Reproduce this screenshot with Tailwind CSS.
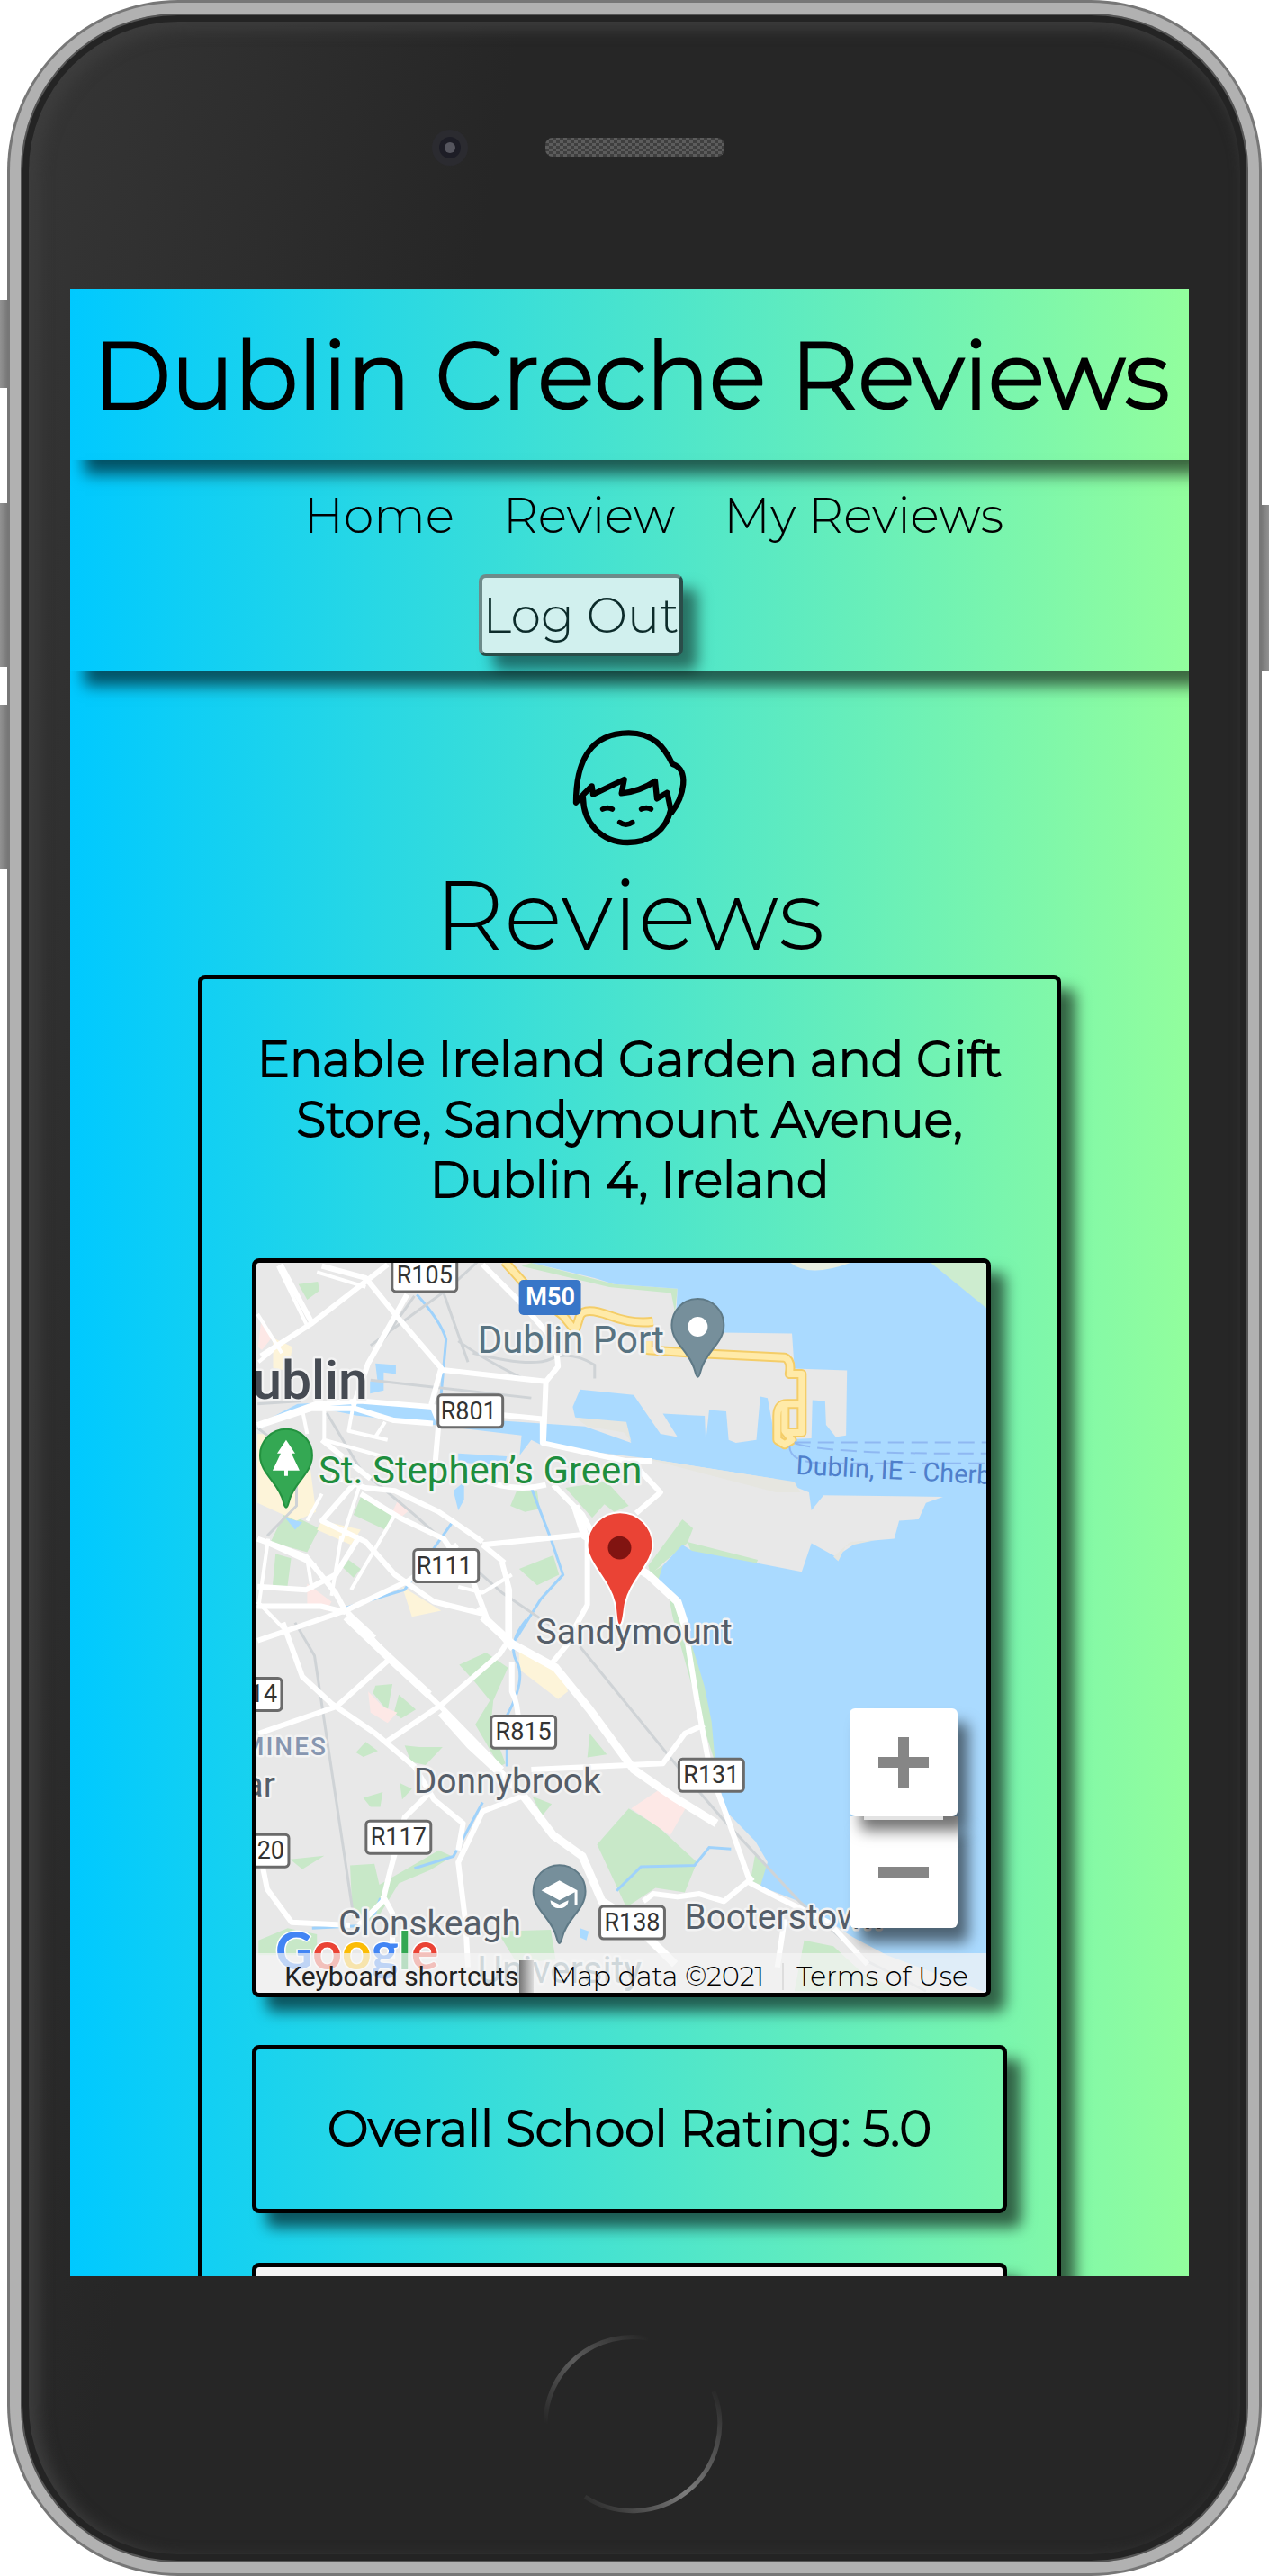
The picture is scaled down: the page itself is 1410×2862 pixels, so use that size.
<!DOCTYPE html>
<html lang="en">
<head>
<meta charset="utf-8">
<title>Dublin Creche Reviews</title>
<script src="https://cdn.jsdelivr.net/npm/@tailwindcss/browser@4"></script>
</head>
<body class="bg-white font-[Montserrat,Inter,sans-serif] text-black">
<div class="relative overflow-hidden pl-2 pr-2">
  <!-- side buttons -->
  <div class="absolute left-0 top-[333px] h-[98px] w-3 bg-gradient-to-r from-[#929292] to-[#6c6c6c]"></div>
  <div class="absolute left-0 top-[559px] h-[182px] w-3 bg-gradient-to-r from-[#929292] to-[#6c6c6c]"></div>
  <div class="absolute left-0 top-[783px] h-[182px] w-3 bg-gradient-to-r from-[#929292] to-[#6c6c6c]"></div>
  <div class="absolute right-0 top-[561px] h-[184px] w-3 bg-gradient-to-r from-[#6c6c6c] to-[#929292]"></div>

  <!-- phone shell -->
  <div class="relative rounded-[190px] bg-[#777] p-[3px]">
    <div class="rounded-[187px] bg-[#b1b1b1] p-[12px]">
      <div class="rounded-[175px] bg-[#262626] bg-[linear-gradient(100deg,#363636_0%,#262626_30%)] shadow-[inset_0_0_0_2px_#555,inset_0_0_0_9px_#242424,inset_8px_6px_16px_12px_#3d3d3d]">
        <div class="flex h-[306px] items-start justify-center pt-[129px]">
          <div class="mr-[86px] flex size-10 items-center justify-center rounded-full bg-[#2b2b30]">
            <div class="flex size-6 items-center justify-center rounded-full bg-[#1d1d26]">
              <div class="size-3 rounded-full bg-[#55555e]"></div>
            </div>
          </div>
          <div class="mr-[125px] mt-[9px] h-[21px] w-[199px] rounded-lg bg-[#484848] bg-[repeating-conic-gradient(#5c5c5c_0_25%,#3f3f3f_0_50%)] bg-[size:8px_6px]"></div>
        </div>

        <!-- screen -->
        <div class="ml-[55px] mr-[66px] h-[2208px] overflow-hidden bg-[linear-gradient(90deg,#00c9ff,#92fe9d)]">
          <header class="flex h-[190px] items-center justify-center pl-1 shadow-[16px_16px_16px_rgba(0,0,0,0.6)]">
            <h1 class="whitespace-nowrap text-[105px] font-light leading-none [-webkit-text-stroke:3px_#000]">Dublin Creche Reviews</h1>
          </header>
          <nav class="flex h-[235px] flex-col items-center shadow-[16px_16px_16px_rgba(0,0,0,0.6)]">
            <div class="flex gap-[54px] pl-[54px] pt-[28px] text-[54px] font-light leading-[68px]">
              <a href="#">Home</a>
              <a href="#">Review</a>
              <a href="#">My Reviews</a>
            </div>
            <button class="mr-[108px] mt-[31px] h-[91px] rounded-lg border-4 border-b-[#2a4d49] border-l-[#6d8b8a] border-r-[#2a4d49] border-t-[#6d8b8a] bg-[#d1f0ee] text-[54px] font-light leading-none text-[#0c2b2a] shadow-[16px_16px_16px_rgba(0,0,0,0.5)]">Log Out</button>
          </nav>

          <main class="flex flex-col px-[142px]">
            <svg class="mt-[44px] h-[170px] w-[200px] self-center" viewBox="0 0 600 510" fill="none" stroke="#000" stroke-width="19" stroke-linecap="round" stroke-linejoin="round" aria-hidden="true">
              <path d="M120 305C120 180 160 73 296 73c80 0 118 45 146 104 58 18 38 108-4 162l-14-67-34 20-6-58c-30 20-72 36-112 40l9-46-104 50-4-28-27 27z"/>
              <path d="M144 290c0 80 60 148 148 148 74 0 130-42 144-110"/>
              <path d="M209 327q17-8 32 0M338 327q17-8 32 0M266 371q21 15 42 0" stroke-width="17"/>
            </svg>
            <h2 class="text-center text-[108px] font-light leading-[112px]">Reviews</h2>

            <section class="mt-[11px] rounded-lg border-[5px] border-black px-[55px] pb-16 pt-[56px] shadow-[16px_16px_16px_rgba(0,0,0,0.6)]">
              <h3 class="text-center text-[54px] font-light leading-[67px] [-webkit-text-stroke:2px_#000]">Enable Ireland Garden and Gift Store, Sandymount Avenue, Dublin 4, Ireland</h3>

              <!-- map -->
              <div class="relative mr-[18px] mt-[53px] aspect-square overflow-hidden rounded-lg border-[5px] border-black bg-[#e8e8e8] shadow-[16px_16px_16px_rgba(0,0,0,0.6)]">
                <svg class="block size-full" viewBox="0 0 812 812" font-family="Roboto, sans-serif" font-size="39">
                  <g transform="matrix(.542 0 0 .3333 -14 -23)">
                    <!-- parks and districts -->
                    <g fill="#c8e8c8">
                      <path d="M112 140l40-8 3 30-25 30zM240 850l65 60-15 50-65-50zM85 900l70 55-25 80-75-35zM65 1040l32 15-8 100-30-10zM215 1060l25 30-15 30-22-35zM560 830l42 0 5 60-30 10-30-20zM660 820l85-20 45 80-30 20-20-25-25 45zM565 1090l70-45 12 65-45 35zM900 925l22 30-12 50-45 60-30 45-5-30zM910 1000l145 60-5 20-130-40z"/>
                      <path d="M442 1410l55-40 45 50-30 110-5 80 30 130-12 10-50-140 30-80-35-70zM270 1480l35-5-10 90-30-60zM318 1510l35 50-30 30-15-20zM330 1680l30 5 48 0-35 60-30-10zM250 1668l25 30-30 20-15-15zM710 1640l35 70-40 10zM592 1850l40 25-20 40zM245 1855l40-20-5 50-20 0zM320 1805l25 20-20 35zM95 2060l70-12-45 45zM400 2030l28 20-45 45-65 45-30 80-20 50-45-20-5-170 50-5 10 70zM790 1890l60 60 80 120-25 100-60-15-60 65-60-210zM1050 2040l35 60-20 50-25-20zM520 2300l110-5 10 100-80 10zM30 2330l60-40 60 20 0 70-120 0zM1150 2330l60 20 60 90 80 60h-220z"/>
                      <path d="M590 69L760 140 890 155 885 235 877 170 750 150 570 80zM860 1080l-30 30 70 90 30 160 40 300 30 240-60-300-60-350z"/>
                    </g>
                    <g fill="#fde8e6"><path d="M35 270l22 50-20 40-8-10zM315 865l28 25-18 25-20-15zM130 1140l50 60-10 30-40-20zM255 1500l30 50 30 20-20 35-35-35zM850 1830l60 50-35 100-80-90z"/></g>
                    <g fill="#fdf4d9"><path d="M28 640l100 10 20 250-40 30-80-60zM60 320l40 30-10 80-30-10zM160 930l80 30-20 50-70-50zM325 1150l50 50 30 30-60 20zM565 1360l90 80 10 60-20 25-80-100z"/></g>
                    <!-- sea, river and docks -->
                    <g fill="#aadaff">
                      <path d="M590 69L720 120 760 140 890 155 885 300 1125 305 1130 422 1238 428 1236 645 1215 650 1195 610 1193 530 1167 527 1165 655 1090 660 1085 610 1075 520 1060 515 1052 660 1010 670 995 660 990 565 955 560 948 665 946 580 860 572 890 650 855 640 800 510 690 492 675 550 680 585 780 610 795 670 700 615 530 596 400 558 300 545 230 530 110 540 28 610 28 625 110 570 160 555 230 578 390 610 570 645 566 712 590 660 615 680 820 720 1090 790 1160 835 1165 895 1190 845 1435 850 1400 870 1385 925 1345 930 1335 990 1260 1000 1215 1050 1165 1005 1145 1100 1050 1070 920 1030 900 1010 860 1080 850 1130 890 1210 910 1300 930 1400 945 1480 960 1600 970 1780 990 1900 1050 2000 1075 2070 1060 2150 1140 2200 1250 2320 1320 2380 1524 2505V69z"/>
                      <path d="M440 705l100 10-5 30-95-10zM430 830l22-30v60l-12 35zM270 405l42 5v30l-25-5v60l-28 10v-40l15-5zM690 2290l18 10-5 30-14-10zM85 920l35 15-15 25z"/>
                    </g>
                    <path d="M1122 69Q1160 120 1245 69z" fill="#e8eee2"/>
                    <path d="M1410 69L1524 220V69z" fill="#cdeccf"/>
                    <path d="M680 585l105 15 10 65-15-30-75-20zM1210 1050l35-50 50-5-60 20-15 50zM820 720l310 80 12 35-50 0z" fill="#e6e6e0"/>
                    <g fill="none" stroke="#9fd2fb" stroke-width="3">
                      <path d="M355 175q50 90 60 150l-10 180" vector-effect="non-scaling-stroke"/>
                      <path d="M590 820l40 170 25 120-45 80-50 130M580 1260q-40 80-20 140t-20 180v170M430 930l-100 230-120 60M765 2165l50-80 110-5 30-60 45 5M490 1870l-60 180-80 40M280 2190l-20 90-120 10" vector-effect="non-scaling-stroke"/>
                    </g>
                    <!-- railways -->
                    <g fill="none" stroke="#cfd3d6" stroke-width="3">
                      <path vector-effect="non-scaling-stroke" d="M260 345l100-120 60-70 60-90M350 180l-70 160M410 170l50 230M440 330q60 70 140 130M470 370q120 50 160 20t90 20v45M260 460l330 60M28 540l90-10M170 570l70 190 110 150 180 260 100 110M105 1270l40 110 80 870M690 1350l200 400 90 170 160 280 140 200 120 100M28 620l80 100 0 160-60 100"/>
                    </g>
                    <!-- streets -->
                    <g fill="none" stroke="#fff" stroke-linejoin="round">
                      <g stroke-width="4">
                        <path vector-effect="non-scaling-stroke" d="M165 540v120l130 60 10 80M225 540l-10 90 80 30M290 600l-20 50M130 640l-10-80M240 800l-40 200M160 840l-30 90M50 990l-20 230M310 910l-90 250M28 990l120 90M130 1060l10 100M28 1200l60 100M70 80l60 200M28 240l50 130M150 100l100 50M60 360l-30 40M480 1220l70 140M540 1320v-200M200 980l-20 200M440 1150l50 20 60-60"/>
                      </g>
                      <g stroke-width="6">
                        <path vector-effect="non-scaling-stroke" d="M75 75l65 195-105 110M295 75l-155 195M160 80l90 40 60 120 95 180-20 120 15 60-10 190M335 175l-80 230-30 140M490 75l80 130 70 130 5 80-25 50-5 200M400 425l220 40M590 300l60 80"/>
                        <path vector-effect="non-scaling-stroke" d="M28 610l120-70 90-10 150 20 130 25 95 15v80l170 60 55 0M28 615l110-60 90 0 80 40 80 10M800 740l55 95-50 70M635 810l60 100 20 60M490 1010l215-35M705 970l0 240-30 90M180 780l70 40 60 10 90 70 90 100M470 780q80 60 150 30"/>
                        <path vector-effect="non-scaling-stroke" d="M160 660l100 130M230 800l-70 130 90 70 60 110 80 90 100 40M240 840l80 80 90 70 60 140 30 130M530 1070l15 90 0 170M490 1010l45 60M28 990l100 60 60 120 20 60 60 90M28 1150l100 10 60-50 50-130M28 1215l130 0 50 20M28 1330l180-100 130-100 100-120M210 1230l90 160 110 170 120 200"/>
                        <path vector-effect="non-scaling-stroke" d="M80 1270l40 180 60 90 90 100 80 110 40 110 60 80-10 90M300 1390l-110 160-160 90M295 1665l110-120 120-170 20-50M550 1400v100q20 60 10 180M630 1410l40-80M28 2000l20 160 50 110 120 10M380 1840l-50 80-30 180-15 100-50 80M570 1850l-80 50-50 170 15 200 5 150M285 2180l20 60v150M590 1760l270-20 45-100 40-30M910 1330l20 200 35 300M960 1780l30 130 50 230 60 50 100 80 80 140M820 2200l20-25 50 10 45-10 50 25 60-80M1110 2260l-15 160"/>
                      </g>
                      <g stroke-width="9">
                        <path vector-effect="non-scaling-stroke" d="M680 880l20 100 130 130 60 90 20 100M490 1250l60 90 90 80 70 140 90 200 80 90 90 90M210 1250l90 140 80 120M405 1570l60 110 100 150 70 150 60 70 40 150 50 50 100 160"/>
                      </g>
                    </g>
                    <!-- motorway and port road -->
                    <g fill="none" stroke-linejoin="round">
                      <path vector-effect="non-scaling-stroke" stroke="#f4cd68" stroke-width="11" d="M535 65l50 90 70 90 25 50 10-50q10-30 60 0t90 20M830 330v30l90 10 190 15q15 10 10 55h25v195h-35M1145 540h-30q-20 0-20 40v80l15 15 15-15-15-30v-85"/>
                      <path vector-effect="non-scaling-stroke" stroke="#ffeaa8" stroke-width="7" d="M535 65l50 90 70 90 25 50 10-50q10-30 60 0t90 20M830 330v30l90 10 190 15q15 10 10 55h25v195h-35M1145 540h-30q-20 0-20 40v80l15 15 15-15-15-30v-85"/>
                    </g>
                    <path vector-effect="non-scaling-stroke" fill="none" stroke="#8fb8f2" stroke-width="2" stroke-dasharray="18 8" d="M1130 668H1524M1130 670q60 38 394 35M1120 680q0 60 80 58h324"/>
                  </g>

                  <!-- pins -->
                  <path d="M491 127c-1 0-2-2-3-6-5-22-26-31-26-52a29 29 0 0 1 58 0c0 21-21 30-26 52-1 4-2 6-3 6z" fill="#768f9b" stroke="#5f7a87" stroke-width="2"/>
                  <circle cx="491" cy="71" r="11" fill="#fff"/>
                  <path d="M33 272c-1 0-2-2-3-6-5-22-26-31-26-52a29 29 0 0 1 58 0c0 21-21 30-26 52-1 4-2 6-3 6z" fill="#34a853" stroke="#23923f" stroke-width="2"/>
                  <path d="M33 197l10 15h-4l9 19H35v6h-4v-6H18l9-19h-4z" fill="#fff"/>
                  <path d="M337 757c-1 0-2-2-3-6-5-22-26-31-26-52a29 29 0 0 1 58 0c0 21-21 30-26 52-1 4-2 6-3 6z" fill="#768f9b" stroke="#5f7a87" stroke-width="2"/>
                  <path d="M337 687l20 11v17h-3v-15l-17 9-20-11zM327 709l10 5 10-5c0 12-20 12-20 0z" fill="#fff"/>

                  <!-- place names -->
                  <g fill="#555e69" stroke="#f3f3f3" stroke-width="5" paint-order="stroke" stroke-linejoin="round">
                    <text x="246" y="100" font-size="42" fill="#587381">Dublin Port</text>
                    <text x="124" y="151" text-anchor="end" font-size="59" font-weight="500" fill="#464b53">Dublin</text>
                    <text x="69" y="245" font-size="42" fill="#1e8e3e">St. Stephen’s Green</text>
                    <text x="311" y="424">Sandymount</text>
                    <text x="79" y="548" text-anchor="end" font-size="28" font-weight="500" letter-spacing="2" fill="#8796b0">RATHMINES</text>
                    <text x="21" y="594" text-anchor="end">Rathgar</text>
                    <text x="175" y="590">Donnybrook</text>
                    <text x="91" y="748">Clonskeagh</text>
                    <text x="476" y="741">Booterstown</text>
                    <text x="246" y="801" font-size="42" fill="#768f9b">University</text>
                  </g>
                  <text x="600" y="235" font-size="29" fill="#4f7fcb" transform="rotate(3 600 235)">Dublin, IE - Cherbourg</text>

                  <!-- road shields -->
                  <g fill="#fff" stroke="#6b6b6b" stroke-width="3">
                    <rect x="151" y="-6" width="72" height="38" rx="4"/><rect x="202" y="147" width="72" height="36" rx="4"/>
                    <rect x="175" y="319" width="72" height="36" rx="4"/><rect x="-44" y="462" width="72" height="36" rx="4"/>
                    <rect x="261" y="504" width="72" height="36" rx="4"/><rect x="470" y="552" width="72" height="36" rx="4"/>
                    <rect x="122" y="621" width="72" height="36" rx="4"/><rect x="-36" y="636" width="72" height="36" rx="4"/>
                    <rect x="382" y="716" width="72" height="36" rx="4"/>
                  </g>
                  <rect x="292" y="19" width="69" height="39" rx="5" fill="#3876c8"/>
                  <g font-size="27" fill="#333" text-anchor="middle">
                    <text x="187" y="23">R105</text><text x="236" y="174">R801</text><text x="209" y="346">R111</text>
                    <text x="-8" y="489">R114</text><text x="297" y="531">R815</text><text x="506" y="579">R131</text>
                    <text x="158" y="648">R117</text><text x="0" y="663">R820</text><text x="418" y="743">R138</text>
                    <text x="327" y="47" fill="#fff" font-weight="700">M50</text>
                  </g>

                  <path d="M404 403c-4 0-3-10-5-22-5-28-31-46-31-67a36 36 0 0 1 73 0c0 21-26 39-31 67-2 12-2 22-6 22z" fill="#ea4335" stroke="#fff" stroke-width="2"/>
                  <circle cx="404" cy="317" r="13" fill="#811411"/>

                  <text x="21" y="786" font-size="57" font-weight="700" font-family="Lato, sans-serif" stroke="#fff" stroke-width="3" paint-order="stroke"><tspan fill="#4285f4">G</tspan><tspan fill="#ea4335">o</tspan><tspan fill="#fbbc05">o</tspan><tspan fill="#4285f4">g</tspan><tspan fill="#34a853">l</tspan><tspan fill="#ea4335">e</tspan></text>
                </svg>

                <div class="absolute right-[32px] top-[495px] flex flex-col">
                  <button aria-label="Zoom in" class="z-10 flex size-[120px] items-center justify-center rounded-md bg-white shadow-[12px_16px_16px_rgba(0,0,0,0.55)]">
                    <svg class="size-14" viewBox="0 0 56 56" fill="#868686"><path d="M22 0h12v22h22v12H34v22H22V34H0V22h22z"/></svg>
                  </button>
                  <div class="relative z-20 -mb-1 bg-transparent px-4"><div class="h-1 bg-[#e3e3e3]"></div></div>
                  <button aria-label="Zoom out" class="flex h-[124px] w-[120px] items-center justify-center rounded-b-md bg-white shadow-[12px_16px_16px_rgba(0,0,0,0.55)]">
                    <svg class="size-14" viewBox="0 0 56 56" fill="#868686"><path d="M0 22h56v12H0z"/></svg>
                  </button>
                </div>
                <div class="absolute inset-x-0 bottom-0 flex h-[44px] items-center justify-end whitespace-nowrap bg-[#f5f5f5]/70 pr-5 pt-2 text-[30px] font-light leading-none">
                  <button class="font-[Roboto] text-[30px] font-normal leading-[36px] text-[#222]">Keyboard shortcuts</button>
                  <div class="h-9 w-4 bg-gradient-to-r from-[#777] to-[#ddd]"></div>
                  <span class="px-[20px]">Map data ©2021</span>
                  <a href="#" class="border-l-2 border-[#ddd] pl-[14px]">Terms of Use</a>
                </div>
              </div>

              <div class="mt-[53px] flex h-[187px] items-center justify-center rounded-lg border-[5px] border-black text-[54px] font-light shadow-[16px_16px_16px_rgba(0,0,0,0.6)] [-webkit-text-stroke:2px_#000]">Overall School Rating: 5.0</div>
              <div class="mt-[55px] h-[187px] rounded-lg border-[5px] border-black bg-[#f4f4f4] shadow-[16px_16px_16px_rgba(0,0,0,0.6)]"></div>
            </section>
          </main>
        </div>

        <!-- home button -->
        <div class="flex h-[318px] items-start justify-center pr-[4px] pt-[63px]">
          <svg class="size-[202px]" viewBox="0 0 202 202" fill="none" stroke-width="5" aria-hidden="true">
            <defs>
              <linearGradient id="ringTop" x1="0" y1="1" x2="1" y2="0"><stop offset="0" stop-color="#262626"/><stop offset=".5" stop-color="#5c5c5c"/><stop offset="1" stop-color="#262626"/></linearGradient>
              <linearGradient id="ringBottom" x1="0" y1="1" x2="1" y2="0"><stop offset="0" stop-color="#262626"/><stop offset=".45" stop-color="#7c7c7c"/><stop offset="1" stop-color="#262626"/></linearGradient>
            </defs>
            <path d="M4 101A97 97 0 0 1 118 6" stroke="url(#ringTop)"/>
            <path d="M48 182A97 97 0 0 0 191 65" stroke="url(#ringBottom)"/>
          </svg>
        </div>
      </div>
    </div>
  </div>
</div>
</body>
</html>
